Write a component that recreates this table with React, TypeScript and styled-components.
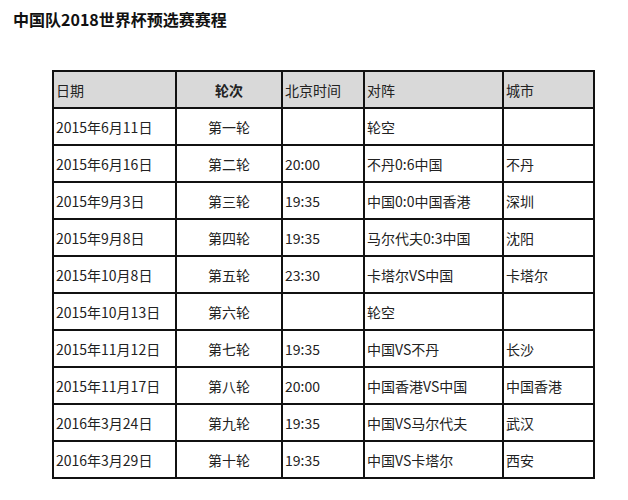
import React from 'react';
import styled, { createGlobalStyle } from 'styled-components';

const GlobalStyle = createGlobalStyle`
    body {
        margin: 0;
        background: #ffffff;
        font-family: "Noto Sans CJK SC", "Noto Sans", sans-serif;
        color: #222;
    }
`;

const StyledPage = styled.div`
    padding: 8px 0 0 13px;
`;

const StyledTitle = styled.h1`
    margin: 0;
    font-size: 16px;
    line-height: 22px;
    font-weight: bold;
    color: #111;
`;

const StyledTable = styled.table`
    margin: 40px 0 0 39px;
    border-collapse: collapse;
    table-layout: fixed;
    width: 541px;
    font-size: 14px;
    color: #222;
`;

const StyledRow = styled.tr`
    height: 37px;
`;

const StyledCell = styled.td<{ $center?: boolean; $head?: boolean }>`
    border: 2px solid #111;
    padding: 0 2px;
    text-align: ${p => (p.$center ? 'center' : 'left')};
    background: ${p => (p.$head ? '#d9d9d9' : '#fff')};
    font-weight: ${p => (p.$head && p.$center ? 'bold' : 'normal')};
    white-space: nowrap;
    vertical-align: middle;
`;

const widths = [123, 106, 82, 139, 91];
const headers = ['日期', '轮次', '北京时间', '对阵', '城市'];

const rows = [
    ['2015年6月11日', '第一轮', '', '轮空', ''],
    ['2015年6月16日', '第二轮', '20:00', '不丹0:6中国', '不丹'],
    ['2015年9月3日', '第三轮', '19:35', '中国0:0中国香港', '深圳'],
    ['2015年9月8日', '第四轮', '19:35', '马尔代夫0:3中国', '沈阳'],
    ['2015年10月8日', '第五轮', '23:30', '卡塔尔VS中国', '卡塔尔'],
    ['2015年10月13日', '第六轮', '', '轮空', ''],
    ['2015年11月12日', '第七轮', '19:35', '中国VS不丹', '长沙'],
    ['2015年11月17日', '第八轮', '20:00', '中国香港VS中国', '中国香港'],
    ['2016年3月24日', '第九轮', '19:35', '中国VS马尔代夫', '武汉'],
    ['2016年3月29日', '第十轮', '19:35', '中国VS卡塔尔', '西安'],
];

export default function App() {
    return (
        <StyledPage>
            <GlobalStyle />
            <StyledTitle>中国队2018世界杯预选赛赛程</StyledTitle>
            <StyledTable>
                <colgroup>
                    {widths.map((w, i) => <col key={i} style={{ width: w }} />)}
                </colgroup>
                <thead>
                    <StyledRow>
                        {headers.map((h, i) => (
                            <StyledCell as="th" key={i} $head $center={i === 1}>{h}</StyledCell>
                        ))}
                    </StyledRow>
                </thead>
                <tbody>
                    {rows.map((r, ri) => (
                        <StyledRow key={ri}>
                            {r.map((c, ci) => (
                                <StyledCell key={ci} $center={ci === 1}>{c}</StyledCell>
                            ))}
                        </StyledRow>
                    ))}
                </tbody>
            </StyledTable>
        </StyledPage>
    );
}
